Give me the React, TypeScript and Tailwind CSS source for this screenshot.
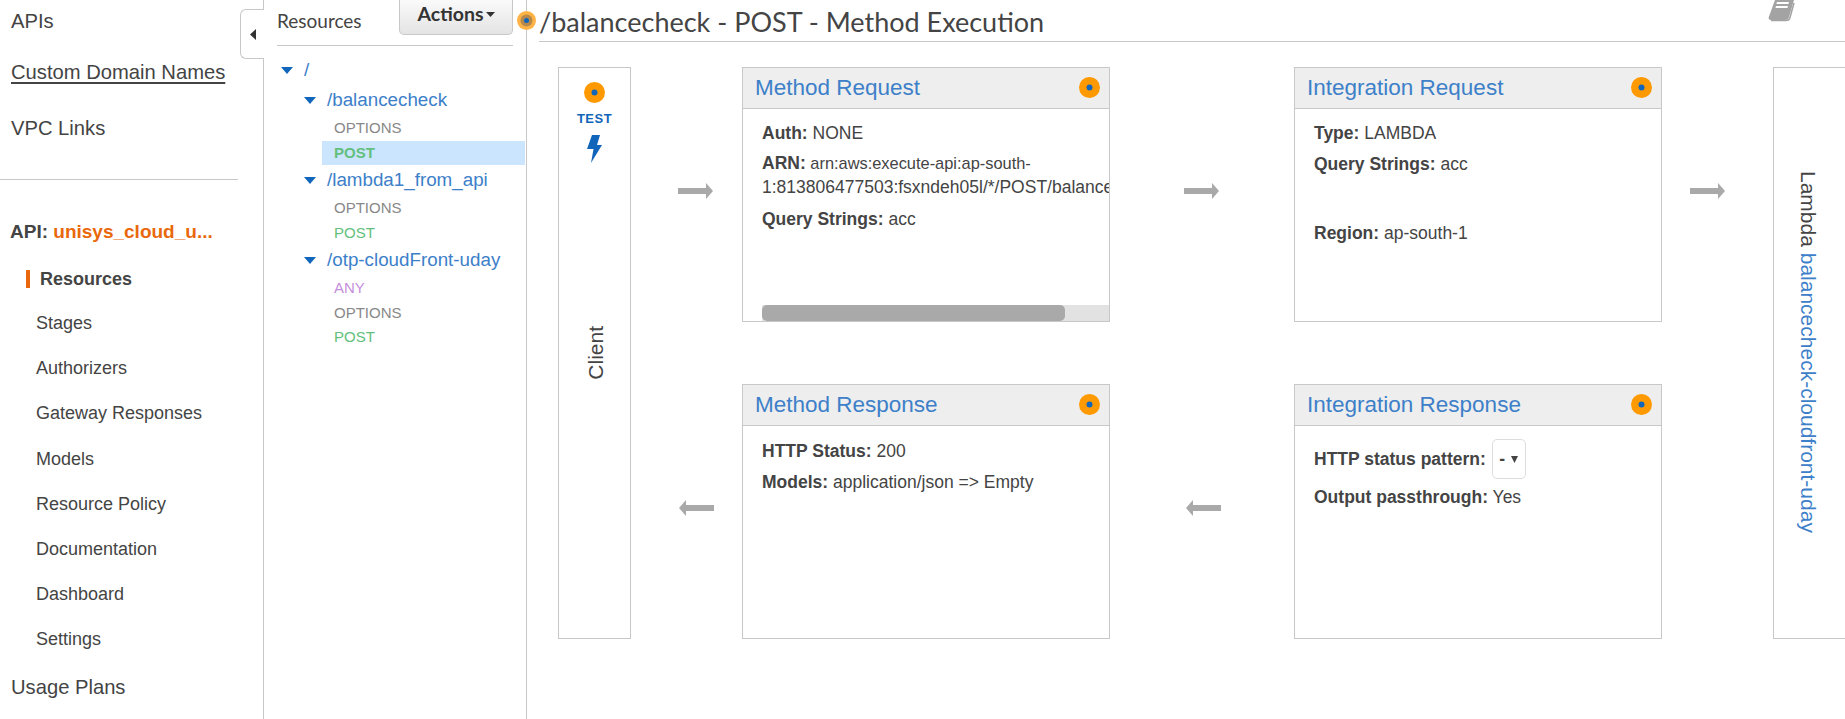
import React from 'react';

const sans = "font-['Liberation_Sans',Arial,sans-serif]";

const GearDot = ({ className = '' }: { className?: string }) => (
  <svg width="21" height="21" viewBox="0 0 21 21" className={className}>
    <circle cx="10.5" cy="10.5" r="10.5" fill="#ff9900" />
    <circle cx="10.5" cy="10.5" r="3" fill="#1166bb" />
  </svg>
);

const Caret = () => (
  <svg width="12" height="7" viewBox="0 0 12 7" className="shrink-0">
    <path d="M0 0H12L6 7Z" fill="#1166bb" />
  </svg>
);

const ArrowRight = () => (
  <svg width="35" height="16" viewBox="0 0 35 16">
    <path d="M0 5H28V0L35 8L28 16V11H0Z" fill="#a9a9a9" />
  </svg>
);

const ArrowLeft = () => (
  <svg width="35" height="16" viewBox="0 0 35 16">
    <path d="M35 5H7V0L0 8L7 16V11H35Z" fill="#a9a9a9" />
  </svg>
);

const Bolt = () => (
  <svg width="15" height="28" viewBox="0 0 15 28">
    <path d="M5 0H13L10 10H15L4 28L6.5 14H0Z" fill="#1166bb" />
  </svg>
);

const Book = () => (
  <svg width="27" height="22" viewBox="0 0 27 22">
    <path d="M7 0H26L21 17C20.5 19 19 20 17 20H3C1 20 0 18.5 1 16.5Z" fill="#a3a3a3" />
    <path d="M3 20.5H18C20 20.5 21.5 19.5 22 17.5L26 3" fill="none" stroke="#a3a3a3" strokeWidth="1.5" />
    <path d="M9 2H21L20.4 4H8.4ZM8 6H20L19.4 8H7.4Z" fill="#fff" />
  </svg>
);

const Card = ({ title, children }: { title: string; children: React.ReactNode }) => (
  <div className="flex flex-col overflow-hidden border border-[#c8c8c8] bg-white">
    <div className="flex h-[41px] shrink-0 items-center justify-between border-b border-[#c8c8c8] bg-[#eeeeee] pl-[12px] pr-[9px]">
      <span className="text-[22.5px] text-[#3d80c9]">{title}</span>
      <GearDot className="-mt-[2px]" />
    </div>
    {children}
  </div>
);

const Line = ({ label, value, className = '' }: { label: string; value: string; className?: string }) => (
  <div className={`text-[17.5px] leading-[24px] text-[#444] ${className}`}>
    <b>{label}</b> {value}
  </div>
);

const topNav = [
  { label: 'APIs', cls: 'h-[42px]' },
  { label: 'Custom Domain Names', cls: 'h-[60px] underline underline-offset-[3px]' },
  { label: 'VPC Links', cls: 'h-[52px]' },
];

const subNav = ['Stages', 'Authorizers', 'Gateway Responses', 'Models', 'Resource Policy', 'Documentation', 'Dashboard', 'Settings'];

const tree = [
  {
    path: '/balancecheck',
    methods: [
      { name: 'OPTIONS', color: 'text-[#888]' },
      { name: 'POST', color: 'text-[#62c07c]', active: true },
    ],
  },
  {
    path: '/lambda1_from_api',
    methods: [
      { name: 'OPTIONS', color: 'text-[#888]' },
      { name: 'POST', color: 'text-[#62c07c]' },
    ],
  },
  {
    path: '/otp-cloudFront-uday',
    methods: [
      { name: 'ANY', color: 'text-[#c58fdc]' },
      { name: 'OPTIONS', color: 'text-[#888]' },
      { name: 'POST', color: 'text-[#62c07c]' },
    ],
  },
];

export default function App() {
  return (
    <div className={`flex h-[719px] w-[1845px] overflow-hidden bg-white text-[#444] ${sans}`}>
      {/* Left nav */}
      <aside className="relative w-[264px] shrink-0 border-r border-[#c8c8c8]">
        <div className="w-[238px]">
          {topNav.map(item => (
            <div key={item.label} className={`flex items-center pl-[11px] text-[20.2px] ${item.cls}`}>{item.label}</div>
          ))}
          <div className="h-[25px]" />
          <div className="border-t border-[#c8c8c8]" />
        </div>
        <div className="mt-[37px] pl-[10px] text-[19px] font-bold leading-[30px]">
          API: <span className="text-[#e9680c]">unisys_cloud_u...</span>
        </div>
        <div className="mt-[23px] flex h-[18px] items-center pl-[26px] text-[18px] font-bold">
          <span className="mr-[10px] h-[18px] w-[4px] bg-[#e9680c]" />
          Resources
        </div>
        <div className="mt-[13px]">
          {subNav.map(item => (
            <div key={item} className="flex h-[45.2px] items-center pl-[36px] text-[18px]">{item}</div>
          ))}
        </div>
        <div className="mt-[10px] flex h-[30px] items-center pl-[11px] text-[20.2px]">Usage Plans</div>
        <button className="absolute right-[-1px] top-[9px] flex h-[50px] w-[24px] items-center justify-center rounded-l-[6px] border border-r-0 border-[#c8c8c8] bg-white">
          <svg width="6" height="11" viewBox="0 0 6 11"><path d="M6 0V11L0 5.5Z" fill="#333" /></svg>
        </button>
      </aside>

      {/* Resource tree */}
      <section className="relative w-[263px] shrink-0 border-r border-[#c8c8c8]">
        <div className="ml-[13px] mr-[13px] flex h-[46px] items-start justify-between border-b border-[#c8c8c8]">
          <span className="mt-[9px] font-['Lato',sans-serif] text-[19px] leading-[24px]">Resources</span>
          <button className="flex h-[35px] w-[114px] items-center justify-center rounded-b-[5px] border border-t-0 border-[#c8c8c8] bg-gradient-to-b from-[#fafafa] to-[#e4e4e4] pb-[6px] font-['Lato',sans-serif] text-[19.5px] font-bold text-[#333]">
            Actions
            <svg width="9" height="5" viewBox="0 0 9 5" className="ml-[2px]"><path d="M0 0H9L4.5 5Z" fill="#333" /></svg>
          </button>
        </div>
        <div className="mt-[9px] flex h-[30px] items-center gap-[11px] pl-[17px] text-[18.8px] text-[#3d80c9]">
          <Caret />/
        </div>
        {tree.map(group => (
          <div key={group.path}>
            <div className="flex h-[31px] items-center gap-[11px] pl-[40px] text-[18.8px] text-[#3d80c9]">
              <Caret />
              {group.path}
            </div>
            {group.methods.map(m => (
              <div
                key={m.name}
                className={`ml-[58px] mr-[1px] flex h-[24.5px] items-center pl-[12px] text-[15px] ${m.color} ${m.active ? 'bg-[#cce5ff] font-bold' : ''}`}
              >
                {m.name}
              </div>
            ))}
          </div>
        ))}
        <svg width="19" height="19" viewBox="0 0 19 19" className="absolute right-[-10px] top-[11px]">
          <circle cx="9.5" cy="9.5" r="9.5" fill="#ffb347" />
          <circle cx="9.5" cy="9.5" r="6" fill="#b8894a" />
          <circle cx="9.5" cy="9.5" r="2.5" fill="#1166bb" />
        </svg>
      </section>

      {/* Method execution */}
      <main className="min-w-0 flex-1">
        <div className="ml-[12px] flex h-[42px] items-start justify-between border-b border-[#c8c8c8] pr-[50px]">
          <h1 className="mt-[4px] font-['Lato',sans-serif] text-[27px] leading-[36px] text-[#444]">
            /balancecheck - POST - Method Execution
          </h1>
          <Book />
        </div>
        <div className="grid grid-cols-[73px_111px_368px_184px_368px_111px_74px] grid-rows-[255px_62px_255px] pl-[31px] pt-[25px]">
          <div className="row-span-3 flex flex-col items-center border border-[#c8c8c8] pt-[14px]">
            <GearDot />
            <span className="mt-[6px] text-[13px] font-bold leading-[20px] tracking-[0.5px] text-[#1166bb]">TEST</span>
            <span className="mt-[6px]"><Bolt /></span>
            <span className="ml-[2px] mt-[163px] rotate-180 text-[21px] [writing-mode:vertical-rl]">Client</span>
          </div>

          <div className="flex items-center pb-[7px] pl-[47px]"><ArrowRight /></div>

          <Card title="Method Request">
            <div className="relative flex-1 overflow-hidden pl-[19px] pt-[12px]">
              <Line label="Auth:" value="NONE" />
              <div className="mt-[6px] whitespace-nowrap text-[16.4px] leading-[24px] text-[#444]">
                <b className="text-[17.5px]">ARN:</b> arn:aws:execute-api:ap-south-
                <br />
                <span className="text-[17.5px]">1:813806477503:fsxndeh05l/*/POST/balancecheck</span>
              </div>
              <Line label="Query Strings:" value="acc" className="mt-[8px]" />
              <div className="absolute bottom-0 left-[19px] right-0 h-[16px] bg-[#e2e2e2]">
                <div className="h-full w-[303px] rounded-[5px] bg-[#a9a9a9]" />
              </div>
            </div>
          </Card>

          <div className="flex items-center pb-[7px] pl-[74px]"><ArrowRight /></div>

          <Card title="Integration Request">
            <div className="pl-[19px] pt-[12px]">
              <Line label="Type:" value="LAMBDA" />
              <Line label="Query Strings:" value="acc" className="mt-[7px]" />
              <Line label="Region:" value="ap-south-1" className="mt-[45px]" />
            </div>
          </Card>

          <div className="flex items-center pb-[7px] pl-[28px]"><ArrowRight /></div>

          <div className="row-span-3 flex items-start justify-center border border-[#c8c8c8] pr-[3px] pt-[103px]">
            <span className="text-[21px] [writing-mode:vertical-rl]">
              Lambda <span className="text-[#3d80c9]">balancecheck-cloudfront-uday</span>
            </span>
          </div>

          <div className="col-start-2 row-start-3 flex items-center pb-[8px] pl-[48px]"><ArrowLeft /></div>

          <div className="col-start-3 row-start-3 grid">
            <Card title="Method Response">
              <div className="pl-[19px] pt-[13px]">
                <Line label="HTTP Status:" value="200" />
                <Line label="Models:" value="application/json => Empty" className="mt-[7px]" />
              </div>
            </Card>
          </div>

          <div className="col-start-4 row-start-3 flex items-center pb-[8px] pl-[76px]"><ArrowLeft /></div>

          <div className="col-start-5 row-start-3 grid">
            <Card title="Integration Response">
              <div className="pl-[19px] pt-[13px]">
                <div className="flex items-center text-[17.5px] text-[#444]">
                  <b>HTTP status pattern:</b>
                  <span className="ml-[6px] flex h-[40px] w-[34px] items-center justify-center gap-[6px] rounded-[5px] border border-[#ddd] font-bold">
                    -
                    <svg width="7" height="7" viewBox="0 0 7 7"><path d="M0 0H7L3.5 7Z" fill="#444" /></svg>
                  </span>
                </div>
                <Line label="Output passthrough:" value="Yes" className="mt-[6px]" />
              </div>
            </Card>
          </div>
        </div>
      </main>
    </div>
  );
}
